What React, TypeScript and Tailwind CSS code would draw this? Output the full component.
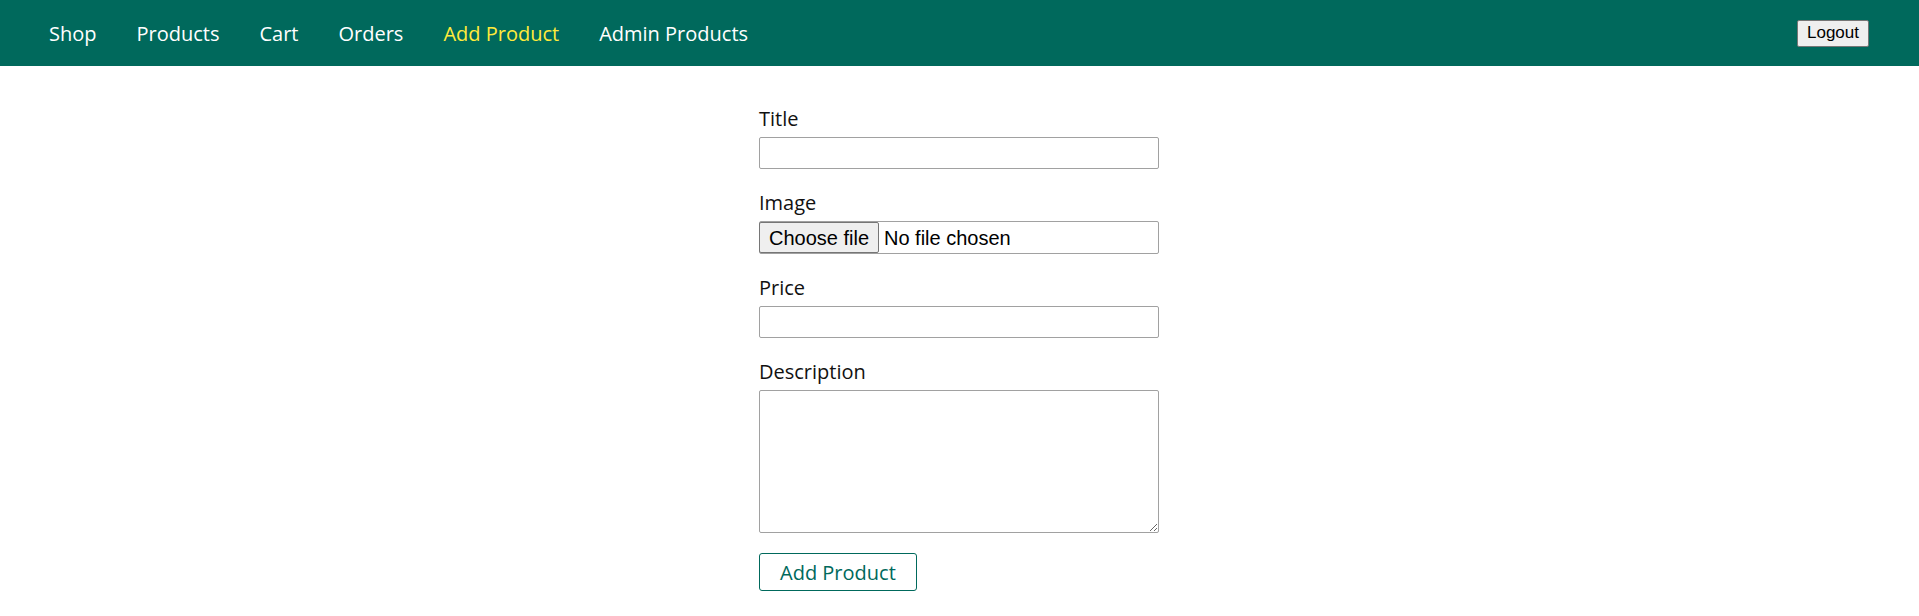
import React from "react";

const navItems = [
  { label: "Shop", active: false },
  { label: "Products", active: false },
  { label: "Cart", active: false },
  { label: "Orders", active: false },
  { label: "Add Product", active: true },
  { label: "Admin Products", active: false },
];

function Field({ label, children }: { label: string; children: React.ReactNode }) {
  return (
    <div className="my-[20px]">
      <label className="block w-full mb-[5px] text-[20px] leading-[27px] text-[#111]">{label}</label>
      {children}
    </div>
  );
}

export default function App() {
  return (
    <div className="min-h-screen bg-white text-black" style={{ fontFamily: '"Open Sans", sans-serif' }}>
      <header className="w-full h-[66px] bg-[#00695c] pl-[29px] pr-[30px] flex items-center">
        <nav className="h-full">
          <ul className="flex items-center h-full">
            {navItems.map((it) => (
              <li key={it.label} className="mx-[20px]">
                <a
                  href="#"
                  className={`text-[20px] leading-[27px] no-underline ${it.active ? "text-[#ffeb3b]" : "text-white"}`}
                >
                  {it.label}
                </a>
              </li>
            ))}
          </ul>
        </nav>
        <div className="ml-auto mx-[20px] flex items-center">
          <button
            className="bg-[#efefef] border border-[#767676] rounded-[2px] px-[9px] h-[27px] text-[17px] leading-[20px] text-black"
            style={{ fontFamily: '"Liberation Sans", Arial, sans-serif' }}
          >
            Logout
          </button>
        </div>
      </header>
      <main className="pt-[19px] pb-[20px] pl-[20px] pr-[21px]">
        <form className="w-[400px] mx-auto">
          <Field label="Title">
            <input
              type="text"
              className="block w-full h-[32px] border border-[#a1a1a1] rounded-[2px] px-[2px] text-[20px] bg-white"
            />
          </Field>
          <Field label="Image">
            <div
              className="flex items-center w-full h-[33px] border border-[#a1a1a1] rounded-[2px] bg-white"
              style={{ fontFamily: '"Liberation Sans", Arial, sans-serif' }}
            >
              <span className="flex items-center h-[31px] w-[120px] justify-center bg-[#efefef] border border-[#767676] rounded-[2px] text-[20px] text-black -ml-px">
                Choose file
              </span>
              <span className="ml-[5px] text-[20px] text-black">No file chosen</span>
            </div>
          </Field>
          <Field label="Price">
            <input
              type="text"
              className="block w-full h-[32px] border border-[#a1a1a1] rounded-[2px] px-[2px] text-[20px] bg-white"
            />
          </Field>
          <Field label="Description">
            <textarea className="block w-full h-[143px] border border-[#a1a1a1] rounded-[2px] px-[2px] text-[20px] bg-white" />
          </Field>
          <button
            type="button"
            className="h-[38px] px-[20px] border border-[#00695c] text-[#00695c] bg-white rounded-[3px] text-[20px] leading-[27px]"
          >
            Add Product
          </button>
        </form>
      </main>
    </div>
  );
}
